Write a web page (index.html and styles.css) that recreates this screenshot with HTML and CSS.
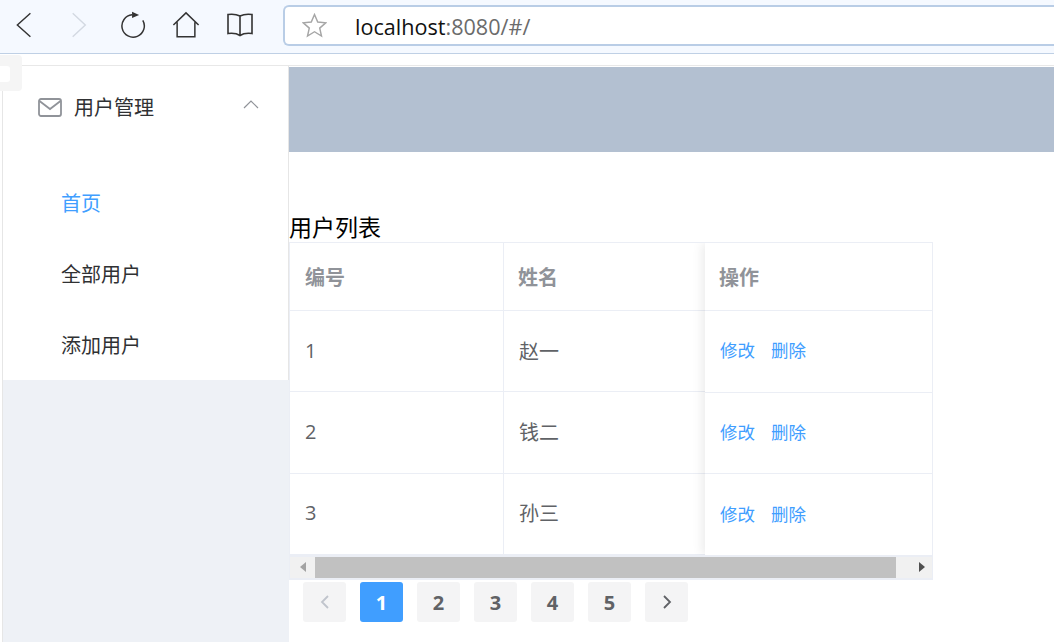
FILE: index.html
```html
<!DOCTYPE html>
<html lang="zh-CN">
<head>
<meta charset="utf-8">
<title>用户管理</title>
<link rel="stylesheet" href="styles.css">
</head>
<body>
<header class="toolbar">
  <nav class="nav-icons">
    <svg class="ico ico-back" viewBox="0 0 20 30"><path d="M16 2 1.500 15 16 28"/></svg>
    <svg class="ico ico-fwd" viewBox="0 0 20 30"><path d="M3 2l14 13L3 28"/></svg>
    <svg class="ico ico-reload" viewBox="0 0 30 30"><path d="M14 4.100A12 12 0 1 0 25.500 10"/><path class="solid" d="M14 .8l7.500 3.400L14 7.600z"/></svg>
    <svg class="ico ico-home" viewBox="0 0 30 30"><path d="M1.500 15 15 2l13.500 13M5.500 12v15.500h19V12"/></svg>
    <svg class="ico ico-book" viewBox="0 0 28 26"><path d="M14 4C11 2.500 6 2 2 2.500v19c4-.5 9 0 12 2 3-2 8-2.500 12-2v-19c-4-.5-9 0-12 1.500zM14 4v19.500"/></svg>
  </nav>
  <div class="address">
    <svg class="star" viewBox="0 0 24 24"><path d="M12 1.500l3.100 7.200 7.700.7-5.800 5.100 1.700 7.600L12 18l-6.700 4.100L7 14.500 1.200 9.400l7.700-.7z"/></svg>
    <span class="url"><span class="host">localhost</span>:8080/#/</span>
  </div>
</header>

<div class="artifact" aria-hidden="true"></div>

<div class="app">
  <aside class="sidebar">
    <ul class="menu">
      <li class="menu-title">
        <svg class="mail" viewBox="0 0 24 19"><rect x="1" y="1" width="22" height="17" rx="2"/><path d="M1.500 3 12 11 22.500 3"/></svg>
        <span class="menu-label">用户管理</span>
        <svg class="caret" viewBox="0 0 16 9"><path d="M1 8l7-7 7 7"/></svg>
      </li>
      <li class="menu-item active">首页</li>
      <li class="menu-item">全部用户</li>
      <li class="menu-item">添加用户</li>
    </ul>
  </aside>

  <main class="main">
    <div class="banner"></div>
    <h2 class="title">用户列表</h2>
    <div class="table">
      <div class="row row-head">
        <div class="cell col-id">编号</div>
        <div class="cell col-name">姓名</div>
      </div>
      <div class="row">
        <div class="cell col-id">1</div>
        <div class="cell col-name">赵一</div>
      </div>
      <div class="row">
        <div class="cell col-id">2</div>
        <div class="cell col-name">钱二</div>
      </div>
      <div class="row">
        <div class="cell col-id">3</div>
        <div class="cell col-name">孙三</div>
      </div>
      <div class="scrollbar">
        <span class="sb-btn"><i class="arrow-left"></i></span>
        <span class="sb-thumb"></span>
        <span class="sb-btn sb-btn-end"><i class="arrow-right"></i></span>
      </div>
      <div class="fixed">
        <div class="fixed-row row-head">操作</div>
        <div class="fixed-row"><a class="link">修改</a><a class="link">删除</a></div>
        <div class="fixed-row"><a class="link">修改</a><a class="link">删除</a></div>
        <div class="fixed-row"><a class="link">修改</a><a class="link">删除</a></div>
      </div>
    </div>
    <div class="pager">
      <button class="page muted"><svg viewBox="0 0 10 16"><path d="M8 2 2 8l6 6"/></svg></button>
      <button class="page current">1</button>
      <button class="page">2</button>
      <button class="page">3</button>
      <button class="page">4</button>
      <button class="page">5</button>
      <button class="page"><svg viewBox="0 0 10 16"><path d="M2 2l6 6-6 6"/></svg></button>
    </div>
  </main>
</div>
</body>
</html>
```

FILE: styles.css
```css
* { box-sizing: border-box; }
html, body { margin: 0; padding: 0; height: 100%; overflow: hidden; background: #fff; }
body { font-family: "Noto Sans CJK SC", "Open Sans", sans-serif; color: #303133; position: relative; }

.toolbar {
  height: 54px;
  background: #f5f9ff;
  border-bottom: 1px solid #bfd0e5;
  display: flex;
  align-items: flex-start;
  padding: 5px 0 0 16px;
}
.nav-icons { display: flex; width: 267px; height: 40px; align-items: center; }
.ico { fill: none; stroke: #333; stroke-width: 1.600; flex: none; }
.ico .solid { fill: #333; stroke: none; }
.ico-back { width: 18px; height: 28px; }
.ico-fwd { width: 18px; height: 28px; margin-left: 36px; stroke: #d3d9e2; }
.ico-reload { width: 28px; height: 28px; margin-left: 31px; }
.ico-home { width: 28px; height: 28px; margin-left: 25px; }
.ico-book { width: 28px; height: 26px; margin-left: 26px; }

.address {
  flex: 1;
  height: 41px;
  margin-right: -8px;
  background: #fff;
  border: 2px solid #b9cde6;
  border-right: 0;
  border-radius: 6px 0 0 6px;
  display: flex;
  align-items: center;
  padding-left: 17px;
}
.star { width: 25px; height: 25px; fill: none; stroke: #a6a6a6; stroke-width: 1.400; }
.url { margin: 2px 0 0 28px; font-family: "Open Sans", sans-serif; font-size: 21.600px; color: #6b6b6b; }
.host { color: #111; }

.artifact {
  position: absolute;
  left: 0; top: 55px;
  width: 22px; height: 36px;
  background: #f5f5f5;
  border-radius: 0 4px 4px 0;
}
.artifact::after {
  content: "";
  position: absolute;
  left: 0; top: 11px;
  width: 10px;
  height: 16px;
  background: #fff;
  border-radius: 0 3px 3px 0;
}

.app { display: flex; height: 588px; margin-top: 11px; margin-left: 2px; border-top: 1px solid #e8e8e8; }

.sidebar {
  width: 287px;
  flex: none;
  background: #eef1f6;
  border-left: 1px solid #e6e6e6;
}
.menu { list-style: none; margin: 0; padding: 0; background: #fff; height: 314px; border-right: 1px solid #e6e6e6; }
.menu-title {
  display: flex;
  align-items: center;
  height: 82px;
  margin-bottom: 20px;
  padding-left: 35px;
  font-size: 20px;
  color: #303133;
}
.mail { width: 24px; height: 19px; fill: none; stroke: #909399; stroke-width: 1.800; flex: none; }
.menu-label { margin-left: 12px; line-height: 1; }
.caret { width: 16px; height: 9px; margin-left: auto; margin-right: 29px; margin-top: -5px; fill: none; stroke: #909399; stroke-width: 1.200; }
.menu-item { height: 71px; line-height: 70px; padding-left: 58px; font-size: 20px; }
.menu-item.active { color: #409eff; }

.main { flex: 1; min-width: 0; }
.banner { height: 85px; background: #b3c0d1; margin-top: 1px; }
.title { margin: 0; padding-top: 61px; height: 90px; font-size: 23px; font-weight: 400; line-height: 27px; color: #000; }

.table {
  position: relative;
  width: 644px;
  height: 338px;
  border: 1px solid #ebeef5;
}
.row { display: flex; height: 81.333px; border-bottom: 1px solid #ebeef5; }
.row.row-head { height: 68px; }
.cell { display: flex; align-items: center; padding: 0 0 2px 15px; font-size: 20px; color: #606266; }
.row-head .cell { padding: 0 0 0 14px; font-weight: 700; color: #909399; }
.col-id { width: 214px; border-right: 1px solid #ebeef5; font-family: "Open Sans", "Noto Sans CJK SC", sans-serif; }
.row-head .col-id { padding-left: 15px; }
.col-name { flex: 1; }

.scrollbar { display: flex; height: 24px; background: #f1f1f1; border-top: 2px solid #ebeef5; border-bottom: 1px solid #ebeef5; }
.sb-btn { width: 25px; flex: none; display: flex; align-items: center; justify-content: center; }
.sb-btn-end { width: 36px; justify-content: flex-end; padding-right: 7px; }
.sb-thumb { flex: 1; background: #c1c1c1; }
.arrow-left { width: 0; height: 0; border: 5px solid transparent; border-left: 0; border-right: 6px solid #a3a3a3; }
.arrow-right { width: 0; height: 0; border: 5px solid transparent; border-right: 0; border-left: 6px solid #505050; }

.fixed {
  position: absolute;
  right: 0; top: 0;
  width: 227px;
  height: 312px;
  background: #fff;
  box-shadow: -3px 0 10px rgba(0, 0, 0, .08);
  clip-path: inset(0 0 0 -14px);
}
.fixed-row { display: flex; align-items: center; height: 81.600px; padding: 0 0 3px 15px; border-bottom: 1px solid #ebeef5; gap: 16px; }
.fixed-row.row-head { height: 68px; padding: 0 0 0 14px; font-weight: 700; color: #909399; font-size: 20px; }
.fixed-row:last-child { border-bottom: 0; }
.link { font-size: 17.500px; color: #409eff; }

.pager { display: flex; gap: 14px; margin: 2px 0 0 14px; }
.page {
  width: 43px; height: 40px;
  border: 0; padding: 0;
  border-radius: 3px;
  background: #f4f4f5;
  color: #606266;
  font: 700 20px "Open Sans", sans-serif;
  display: flex; align-items: center; justify-content: center;
}
.page svg { width: 10px; height: 16px; fill: none; stroke: #606266; stroke-width: 1.800; }
.page.muted svg { stroke: #c0c4cc; }
.page.current { background: #409eff; color: #fff; }
```
